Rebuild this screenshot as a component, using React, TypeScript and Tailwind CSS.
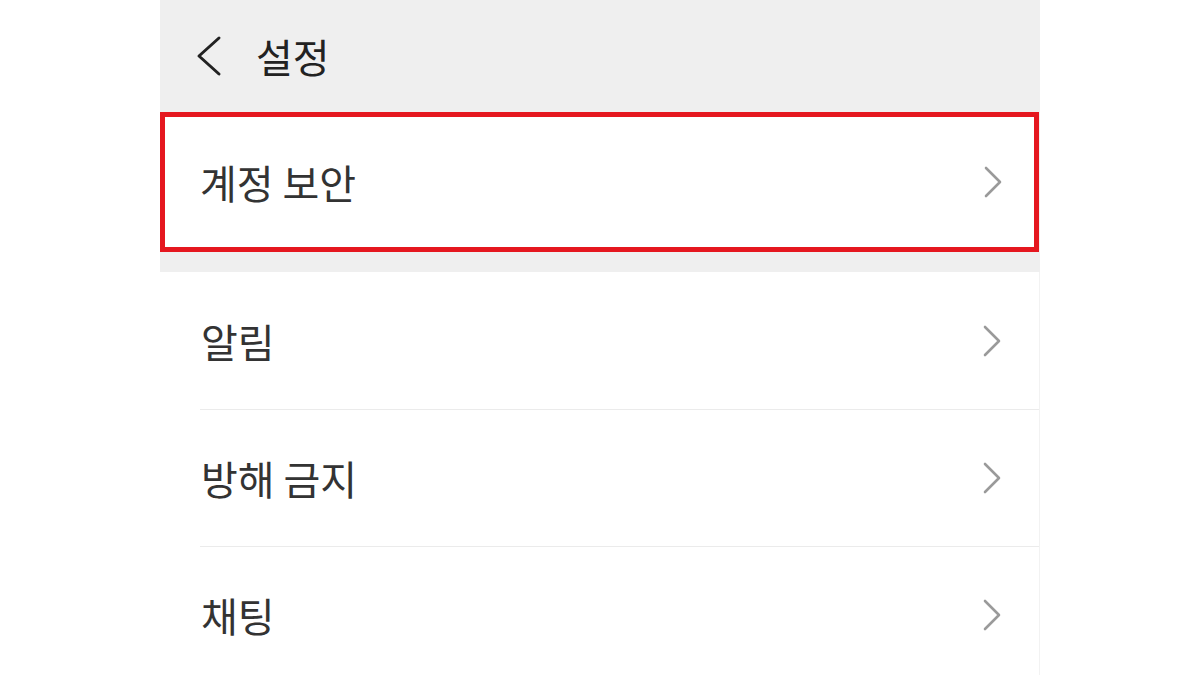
const font = { fontFamily: '"Noto Sans CJK KR", "Noto Sans", sans-serif' };

function RowChevron() {
  return (
    <svg width="20" height="32" viewBox="0 0 20 32" fill="none">
      <polyline
        points="3,2 17,16 3,30"
        stroke="#9a9a9a"
        strokeWidth="2.6"
        strokeLinecap="round"
        strokeLinejoin="round"
      />
    </svg>
  );
}

export default function App() {
  const rows = ["알림", "방해 금지", "채팅"];

  return (
    <div className="w-full h-[675px] bg-white flex justify-center overflow-hidden" style={font}>
      <div className="w-[880px] flex flex-col">
        {/* 상단 헤더 */}
        <div className="h-[112px] bg-[#efefef] flex items-center pl-[36px] shrink-0">
          <svg width="26" height="42" viewBox="0 0 26 42" fill="none">
            <polyline
              points="23,3 3,21 23,39"
              stroke="#222"
              strokeWidth="3"
              strokeLinecap="round"
              strokeLinejoin="round"
            />
          </svg>
          <span className="ml-[34px] text-[40px] leading-none text-[#222]">설정</span>
        </div>

        {/* 강조된 항목 */}
        <div className="bg-[#efefef] pb-[20px] pr-[1px] shrink-0">
          <div className="h-[140px] bg-white border-[5px] border-[#e5171f] flex items-center justify-between pl-[35px] pr-[31px]">
            <span className="text-[40px] leading-none text-[#333]">계정 보안</span>
            <RowChevron />
          </div>
        </div>

        <div className="flex-1 bg-white border-r border-[#f2f2f2]">
          {rows.map((r, i) => (
            <div key={r} className="pl-[40px]">
              <div
                className={
                  "h-[137px] flex items-center justify-between pl-[1px] pr-[37px] " +
                  (i > 0 ? "border-t border-[#ebebeb]" : "")
                }
              >
                <span className="text-[40px] leading-none text-[#333]">{r}</span>
                <RowChevron />
              </div>
            </div>
          ))}
        </div>
      </div>
    </div>
  );
}
